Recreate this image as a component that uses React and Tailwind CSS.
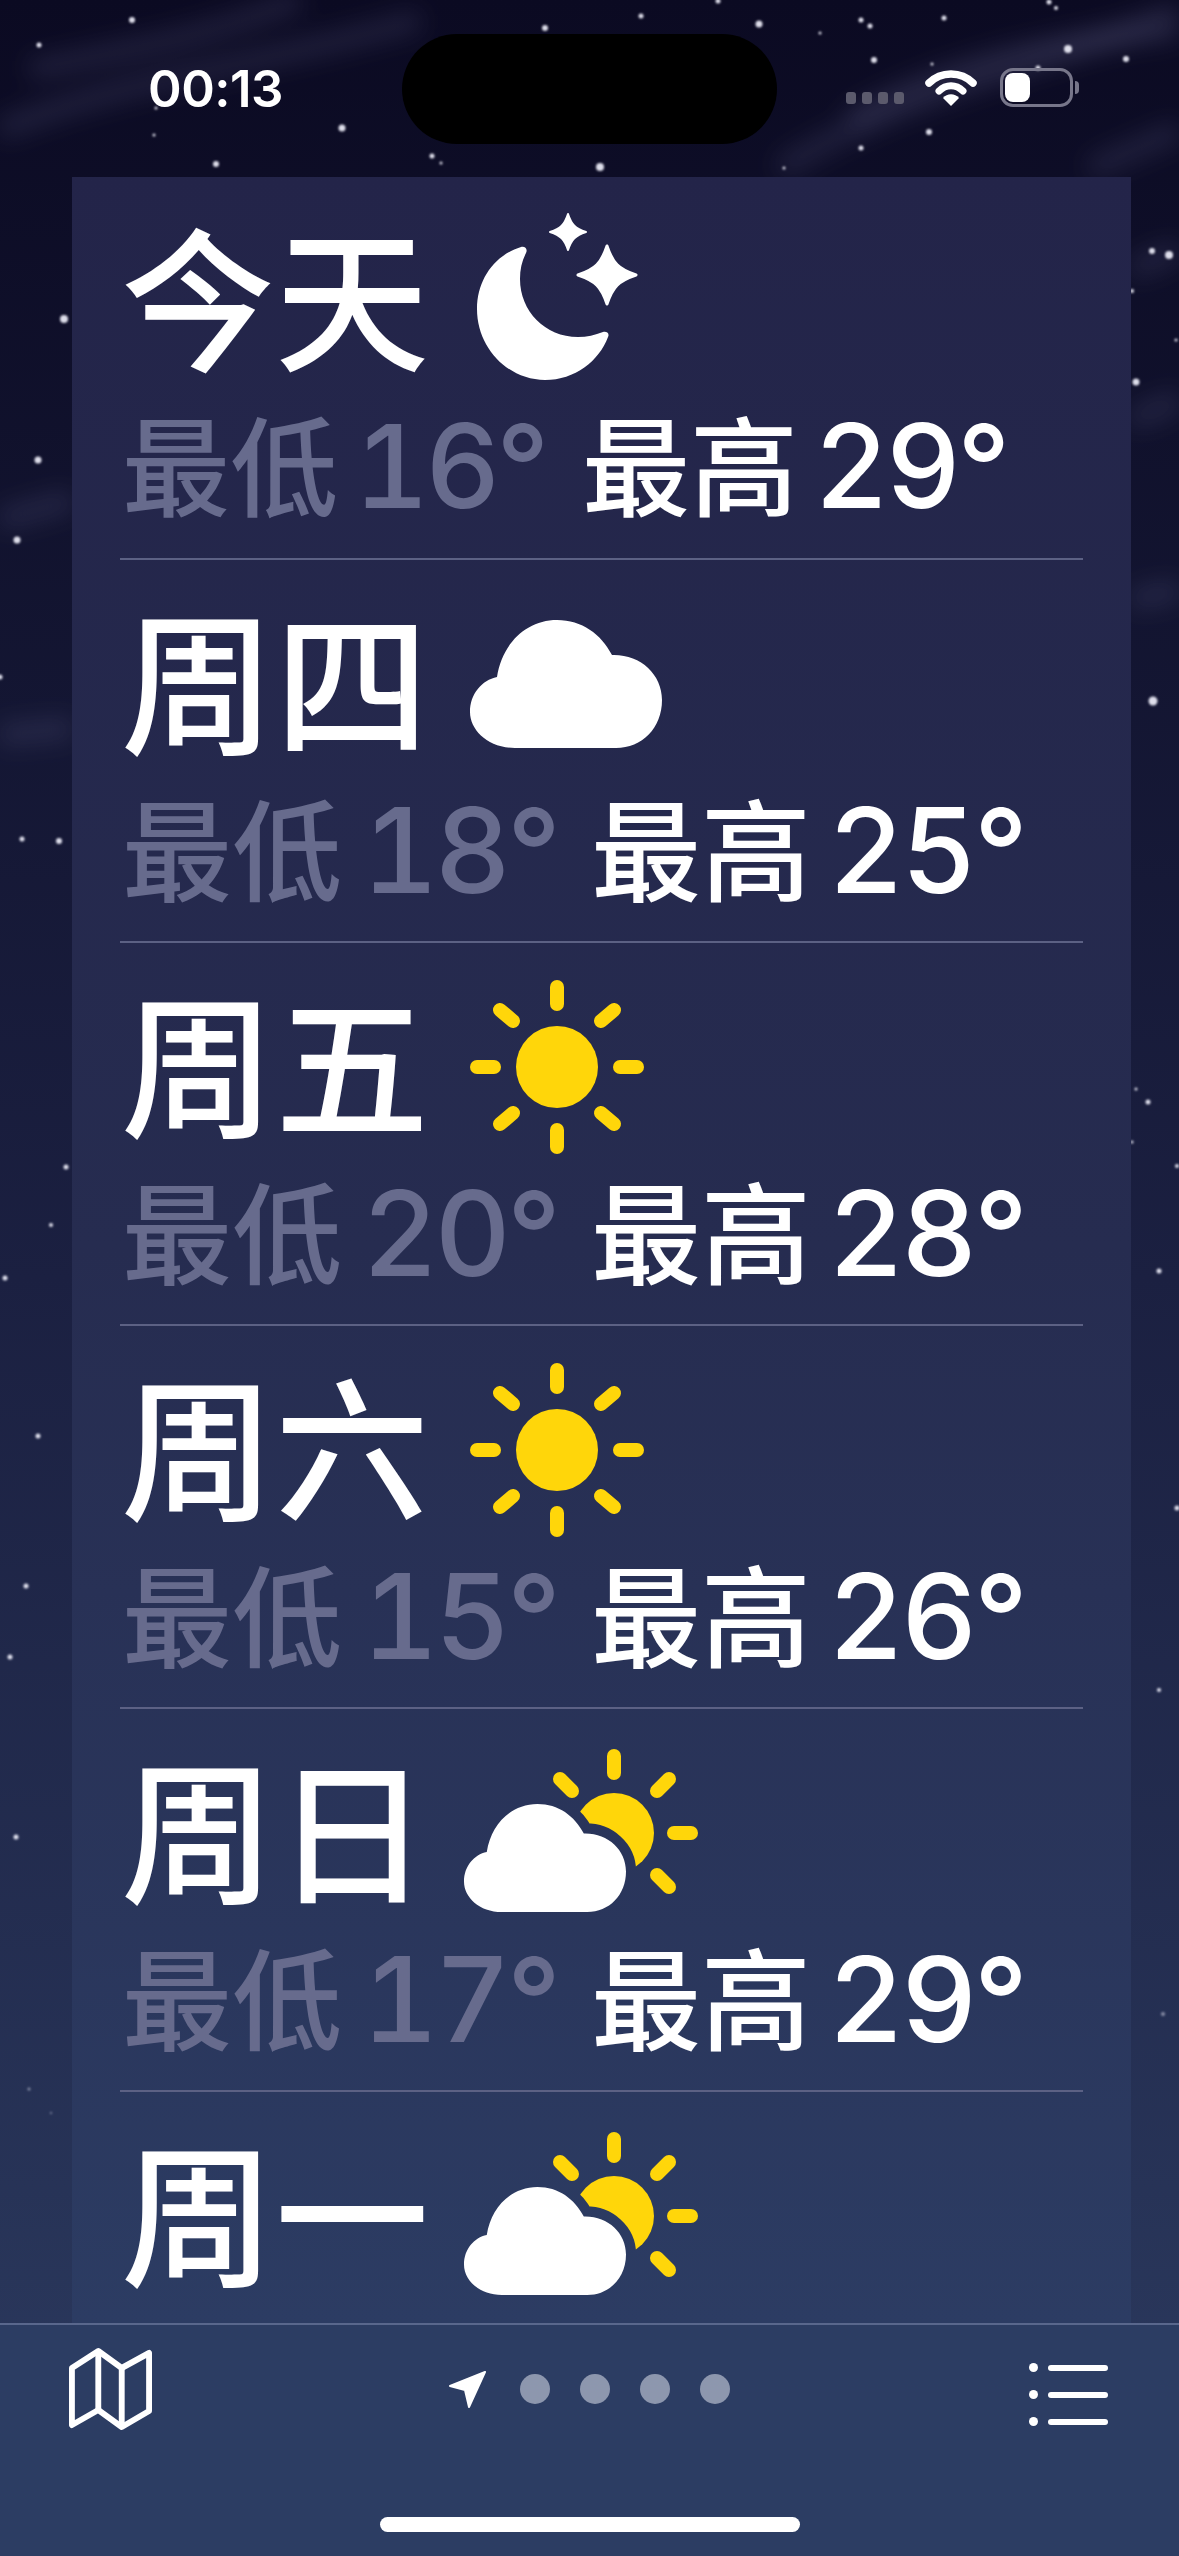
import React from 'react';

const stars = [
  [132,20,3],[39,45,2.5],[545,28,3],[641,16,2.5],[759,24,3.5],[861,20,2.5],[870,26,2.5],[944,18,2.5],[1049,2,2.5],[1056,8,2],
  [1068,49,4],[1126,59,3],[874,60,3],[820,33,1.5],[342,128,3.5],[154,135,1.5],[432,156,2.5],[216,164,3],[600,167,4],[929,132,3],
  [861,148,2.5],[784,168,1.5],[441,163,1.5],[1038,68,2.5],[718,1,2.5],[156,108,1.5],[932,64,1.5],
  [64,319,4],[38,460,3.5],[17,540,3.5],[0,677,2.5],[22,839,2.5],[59,841,3],[66,1167,2.5],[51,1225,2],
  [1152,251,3],[1169,255,4],[1132,291,2],[1176,340,1.5],[1136,382,3.5],[1153,701,4.5],[1136,1089,1.5],[1148,1102,2.5],[1132,1142,1.5],[1177,1166,2],
  [5,1278,2.5],[38,1436,2.5],[26,1586,2.5],[10,1657,2.5],[16,1837,2.5],[29,2089,1.5],[51,2113,1],
  [1159,1271,2.5],[1177,1508,2.5],[1159,1690,2],[1163,2014,2],
];

const wisps = [
  'M0 130 C120 80 240 70 420 20',
  'M30 70 C120 50 200 40 300 0',
  'M780 170 C900 90 1040 70 1179 10',
  'M850 120 C950 60 1060 40 1179 30',
  'M1090 170 C1130 150 1160 140 1179 130',
  'M1131 270 L1179 250',
  'M1131 420 L1179 400',
  'M1131 600 L1179 590',
  'M0 520 L72 500',
  'M0 735 L72 728',
];

const CLOUD = 'M45 128C18 128 0 110 0 92C0 74 12 60 27 57C32 24 56 0 87 0C112 0 131 14 142 35C170 34 192 54 192 80C192 108 172 128 146 128Z';

const days = [
  { name: '今天', icon: 'moon', low: '16°', high: '29°', first: true },
  { name: '周四', icon: 'cloud', low: '18°', high: '25°' },
  { name: '周五', icon: 'sun', low: '20°', high: '28°' },
  { name: '周六', icon: 'sun', low: '15°', high: '26°' },
  { name: '周日', icon: 'partly', low: '17°', high: '29°' },
  { name: '周一', icon: 'partly' },
];

function sparkle(cx, cy, r) {
  const a = r * 0.2;
  return `M${cx} ${cy - r}C${cx + a} ${cy - a * 2} ${cx + a * 2} ${cy - a} ${cx + r} ${cy}C${cx + a * 2} ${cy + a} ${cx + a} ${cy + a * 2} ${cx} ${cy + r}C${cx - a} ${cy + a * 2} ${cx - a * 2} ${cy + a} ${cx - r} ${cy}C${cx - a * 2} ${cy - a} ${cx - a} ${cy - a * 2} ${cx} ${cy - r}Z`;
}

function Moon() {
  return (
    <svg width="163" height="179" viewBox="0 0 163 179" className="ml-[48px] mt-[-27px] shrink-0">
      <path fill="#fff" d="M44 46C18 54 0 78 0 108C0 147 31 179 68 179C98 179 122 160 131 136C133 132 129 130 126 131C118 134 110 136 101 136C68 136 43 110 43 78C43 68 45 60 49 52C51 48 48 45 44 46Z" />
      <path fill="#fff" stroke="#fff" strokeWidth="2" strokeLinejoin="round" d={sparkle(91, 31, 18)} />
      <path fill="#fff" stroke="#fff" strokeWidth="3" strokeLinejoin="round" d={sparkle(130, 74, 29)} />
    </svg>
  );
}

function Cloud() {
  return (
    <svg width="192" height="128" viewBox="0 0 192 128" className="ml-[41px] mt-[-6px] shrink-0">
      <path fill="#fff" d={CLOUD} />
    </svg>
  );
}

function Sun() {
  const rays = [
    [87, 7, 87, 24], [87, 150, 87, 167], [7, 87, 24, 87], [150, 87, 167, 87],
    [30, 30, 43, 41], [144, 30, 131, 41], [30, 144, 43, 133], [144, 144, 131, 133],
  ];
  return (
    <svg width="175" height="175" viewBox="0 0 175 175" className="ml-[41px] mt-[-6px] shrink-0">
      <circle cx="87" cy="87" r="41" fill="#ffd60a" />
      {rays.map((r, i) => (
        <line key={i} x1={r[0]} y1={r[1]} x2={r[2]} y2={r[3]} stroke="#ffd60a" strokeWidth="14" strokeLinecap="round" />
      ))}
    </svg>
  );
}

function Partly({ id }) {
  const rays = [[150, 7, 150, 24], [210, 84, 227, 84], [193, 42, 205, 30], [96, 30, 108, 42], [193, 126, 205, 138]];
  return (
    <svg width="234" height="163" viewBox="0 0 234 163" className="ml-[35px] mt-[-11px] shrink-0">
      <mask id={id} maskUnits="userSpaceOnUse" x="0" y="0" width="234" height="163">
        <rect width="234" height="163" fill="#fff" />
        <g transform="translate(0 55) scale(0.84375)">
          <path d={CLOUD} fill="#000" stroke="#000" strokeWidth="24" />
        </g>
      </mask>
      <circle cx="150" cy="84" r="40" fill="#ffd60a" mask={`url(#${id})`} />
      {rays.map((r, i) => (
        <line key={i} x1={r[0]} y1={r[1]} x2={r[2]} y2={r[3]} stroke="#ffd60a" strokeWidth="14" strokeLinecap="round" />
      ))}
      <g transform="translate(0 55) scale(0.84375)">
        <path d={CLOUD} fill="#fff" />
      </g>
    </svg>
  );
}

function DayIcon({ type, id }) {
  if (type === 'moon') return <Moon />;
  if (type === 'cloud') return <Cloud />;
  if (type === 'sun') return <Sun />;
  return <Partly id={id} />;
}

function DayRow({ day, index }) {
  const cjk = day.first ? 'text-[108px]' : 'text-[110px]';
  const num = day.first ? 'text-[116px]' : 'text-[118px]';
  return (
    <div className={`${day.low ? 'border-b-2 border-[#5c6184]' : ''} h-[383px] shrink-0 flex flex-col`}>
      <div className="h-[210px] flex items-center pl-[1px] pt-[44px]">
        <span className="text-[154px] leading-none font-medium text-white">{day.name}</span>
        <DayIcon type={day.icon} id={`sun-mask-${index}`} />
      </div>
      {day.low && (
        <div className="leading-none font-medium flex items-baseline pl-[2px] mt-[21px] tabular-nums">
          <span className={`${cjk} text-[#676b8d]`}>最低</span>
          <span className={`${num} text-[#676b8d] tracking-[-4px] ${day.first ? 'ml-[16px] w-[228px]' : 'ml-[20px] w-[229px]'}`}>{day.low}</span>
          <span className={`${cjk} text-white`}>最高</span>
          <span className={`${num} text-white tracking-[-3.5px] ${day.first ? 'ml-[16px]' : 'ml-[17px]'}`}>{day.high}</span>
        </div>
      )}
    </div>
  );
}

function StatusBar() {
  return (
    <div className="h-[177px] shrink-0 flex pt-[34px] relative">
      <div className="w-[402px] pl-[148px] pt-[30px] text-[51px] leading-[50px] font-semibold text-white tracking-[-0.5px]">00:13</div>
      <div className="w-[375px] h-[110px] rounded-[55px] bg-black" />
      <div className="flex items-start pl-[69px] pt-[34px]">
        <div className="flex gap-[6px] mt-[24px]">
          {[0, 1, 2, 3].map((i) => <div key={i} className="w-[10px] h-[12px] rounded-[3px] bg-[#5b5a6c]" />)}
        </div>
        <svg width="52" height="38" viewBox="0 0 52 38" className="ml-[21px]">
          <path d="M4 15C16 3 36 3 48 15" fill="none" stroke="#fff" strokeWidth="7.5" strokeLinecap="round" />
          <path d="M14 23C21 16 31 16 38 23" fill="none" stroke="#fff" strokeWidth="7" strokeLinecap="round" />
          <path d="M18 30C22 25 30 25 34 30L26 38Z" fill="#fff" />
        </svg>
        <div className="ml-[23px] w-[73px] h-[39px] rounded-[13px] border-[3px] border-[#77768a] p-[2px]">
          <div className="w-[25px] h-full rounded-[8px] bg-white" />
        </div>
        <div className="ml-[2px] mt-[13px] w-[4px] h-[13px] rounded-r-full bg-[#77768a]" />
      </div>
    </div>
  );
}

function TabBar() {
  return (
    <div className="h-[233px] shrink-0 bg-[#2c3d63] border-t-2 border-[#59678c] flex flex-col">
      <div className="flex items-start justify-between pl-[69px] pr-[71px] pt-[22px] h-[192px]">
        <svg width="83" height="85" viewBox="-3 -3 85 85" preserveAspectRatio="none" fill="none" stroke="#fff" strokeWidth="6" strokeLinejoin="round">
          <path d="M0 18L27 1L51 18L79 3V61L51 77L27 60L0 75Z" />
          <path d="M27 1V60M51 18V77" />
        </svg>
        <div className="flex items-center gap-[30px] mt-[23px]">
          <svg width="38" height="38" viewBox="0 0 38 38" className="-translate-x-[3px]">
            <path d="M36 2L1 16L16 20L20 37Z" fill="#fff" stroke="#fff" strokeWidth="2" strokeLinejoin="round" />
          </svg>
          {[0, 1, 2, 3].map((i) => <div key={i} className="w-[30px] h-[30px] rounded-full bg-[#8d97ae]" />)}
        </div>
        <div className="flex flex-col gap-[18px] mt-[16px]">
          {[0, 1, 2].map((i) => (
            <div key={i} className="flex items-center gap-[10px]">
              <div className="w-[9px] h-[9px] rounded-full bg-white" />
              <div className="w-[60px] h-[6px] rounded-full bg-white" />
            </div>
          ))}
        </div>
      </div>
      <div className="w-[420px] h-[15px] rounded-full bg-white self-center" />
    </div>
  );
}

export default function App() {
  return (
    <div className="w-[1179px] h-[2556px] relative overflow-hidden flex flex-col bg-gradient-to-b from-[#0b0a22] via-[#1b2041] to-[#2c3b60] font-['Inter','Noto_Sans_CJK_SC',sans-serif]">
      <svg className="absolute inset-0" width="1179" height="2556" viewBox="0 0 1179 2556">
        <defs>
          <filter id="soft" x="-20%" y="-200%" width="140%" height="500%"><feGaussianBlur stdDeviation="12" /></filter>
          <filter id="glow" x="-100%" y="-100%" width="300%" height="300%"><feGaussianBlur stdDeviation="0.8" /></filter>
        </defs>
        <g filter="url(#soft)" fill="none" stroke="#8d8cc0" strokeOpacity="0.16" strokeWidth="20">
          {wisps.map((d, i) => <path key={i} d={d} />)}
        </g>
        <g filter="url(#glow)" fill="#f4f4ff">
          {stars.map((s, i) => <circle key={i} cx={s[0]} cy={s[1]} r={s[2]} fillOpacity={s[1] > 1900 ? 0.5 : 0.9} />)}
        </g>
      </svg>
      <div className="relative flex-1 min-h-0 flex flex-col">
        <StatusBar />
        <div className="flex-1 min-h-0 ml-[72px] mr-[48px] overflow-hidden px-[48px] bg-gradient-to-b from-[#232449] via-[#262c50] to-[#2c3c63]">
          {days.map((day, i) => <DayRow key={day.name} day={day} index={i} />)}
        </div>
      </div>
      <div className="relative">
        <TabBar />
      </div>
    </div>
  );
}
